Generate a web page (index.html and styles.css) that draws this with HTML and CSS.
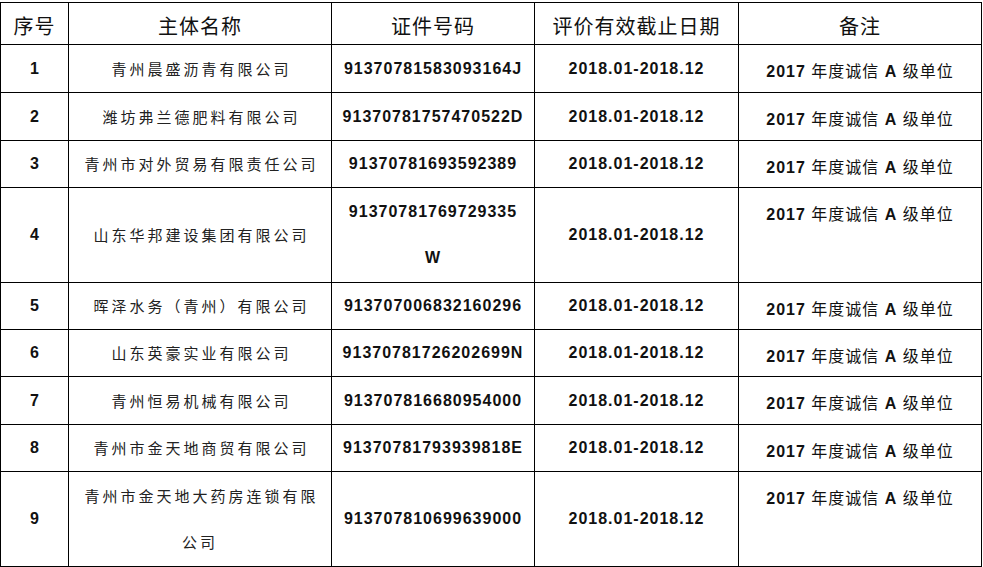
FILE: index.html
```html
<!DOCTYPE html>
<html lang="zh-CN">
<head>
<meta charset="utf-8">
<title>诚信A级单位名单</title>
<link rel="stylesheet" href="styles.css">
</head>
<body>
<table class="list">
  <colgroup>
    <col class="c-no">
    <col class="c-name">
    <col class="c-id">
    <col class="c-date">
    <col class="c-note">
  </colgroup>
  <thead>
    <tr class="rh">
      <th>序号</th>
      <th>主体名称</th>
      <th>证件号码</th>
      <th>评价有效截止日期</th>
      <th>备注</th>
    </tr>
  </thead>
  <tbody>
    <tr class="r48">
      <td class="no">1</td>
      <td class="name">青州晨盛沥青有限公司</td>
      <td class="id">91370781583093164J</td>
      <td class="date">2018.01-2018.12</td>
      <td class="note"><b>2017</b> 年度诚信 <b>A</b> 级单位</td>
    </tr>
    <tr class="r48">
      <td class="no">2</td>
      <td class="name">潍坊弗兰德肥料有限公司</td>
      <td class="id">91370781757470522D</td>
      <td class="date">2018.01-2018.12</td>
      <td class="note"><b>2017</b> 年度诚信 <b>A</b> 级单位</td>
    </tr>
    <tr class="r47">
      <td class="no">3</td>
      <td class="name">青州市对外贸易有限责任公司</td>
      <td class="id">91370781693592389</td>
      <td class="date">2018.01-2018.12</td>
      <td class="note"><b>2017</b> 年度诚信 <b>A</b> 级单位</td>
    </tr>
    <tr class="r95">
      <td class="no">4</td>
      <td class="name">山东华邦建设集团有限公司</td>
      <td class="id">91370781769729335<br>W</td>
      <td class="date">2018.01-2018.12</td>
      <td class="note"><b>2017</b> 年度诚信 <b>A</b> 级单位</td>
    </tr>
    <tr class="r47">
      <td class="no">5</td>
      <td class="name">晖泽水务（青州）有限公司</td>
      <td class="id">913707006832160296</td>
      <td class="date">2018.01-2018.12</td>
      <td class="note"><b>2017</b> 年度诚信 <b>A</b> 级单位</td>
    </tr>
    <tr class="r47">
      <td class="no">6</td>
      <td class="name">山东英豪实业有限公司</td>
      <td class="id">91370781726202699N</td>
      <td class="date">2018.01-2018.12</td>
      <td class="note"><b>2017</b> 年度诚信 <b>A</b> 级单位</td>
    </tr>
    <tr class="r48">
      <td class="no">7</td>
      <td class="name">青州恒易机械有限公司</td>
      <td class="id">913707816680954000</td>
      <td class="date">2018.01-2018.12</td>
      <td class="note"><b>2017</b> 年度诚信 <b>A</b> 级单位</td>
    </tr>
    <tr class="r47">
      <td class="no">8</td>
      <td class="name">青州市金天地商贸有限公司</td>
      <td class="id">91370781793939818E</td>
      <td class="date">2018.01-2018.12</td>
      <td class="note"><b>2017</b> 年度诚信 <b>A</b> 级单位</td>
    </tr>
    <tr class="r95">
      <td class="no">9</td>
      <td class="name">青州市金天地大药房连锁有限<br>公司</td>
      <td class="id">913707810699639000</td>
      <td class="date">2018.01-2018.12</td>
      <td class="note"><b>2017</b> 年度诚信 <b>A</b> 级单位</td>
    </tr>
  </tbody>
</table>
</body>
</html>
```

FILE: styles.css
```css
html, body {
  margin: 0;
  padding: 0;
  background: #ffffff;
}

body {
  padding-top: 2px;
  font-family: "Liberation Sans", "Noto Sans CJK SC", sans-serif;
  color: #111111;
}

.list {
  border-collapse: collapse;
  table-layout: fixed;
  width: 981px;
}

.c-no { width: 68px; }
.c-name { width: 263px; }
.c-id { width: 203px; }
.c-date { width: 204px; }
.c-note { width: 243px; }

.list th,
.list td {
  border: 1px solid #000000;
  padding: 0;
  text-align: center;
  vertical-align: middle;
  line-height: 46px;
  overflow: hidden;
  white-space: nowrap;
}

.list th {
  font-family: "Noto Sans CJK SC", sans-serif;
  font-weight: 400;
  font-size: 20px;
  letter-spacing: 1px;
  line-height: 36px;
  padding-top: 4px;
}

.rh { height: 42px; }
.r47 { height: 47px; }
.r48 { height: 48px; }
.r95 { height: 95px; }

.list .no {
  font-weight: 700;
  font-size: 16px;
}

.list .name {
  font-family: "Noto Sans CJK SC", sans-serif;
  font-size: 15px;
  letter-spacing: 3px;
  text-indent: 3px;
  color: #222222;
}

.list .id,
.list .date {
  font-weight: 700;
  font-size: 16px;
  letter-spacing: 1px;
}

.list .note {
  vertical-align: top;
  padding-top: 8px;
  font-family: "Liberation Sans", "Noto Sans CJK SC", sans-serif;
  font-size: 16px;
  letter-spacing: 1px;
  line-height: 38px;
}

.list .note b {
  font-weight: 700;
}
```
